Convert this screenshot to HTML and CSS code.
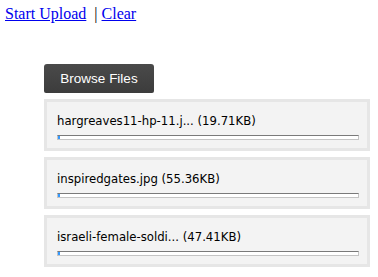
FILE: index.html
```html
<!DOCTYPE html>
<html lang="en">
<head>
    <meta charset="UTF-8">
    <title>Upload</title>
    <link rel="stylesheet" href="styles.css">
</head>
<body>
    <div class="links">
        <a href="#">Start Upload</a> &nbsp;|&nbsp;<a href="#">Clear</a>
    </div>

    <div class="uploader">
        <div class="browse">Browse Files</div>

        <div class="queue">
            <div class="item">
                <div class="name">hargreaves11-hp-11.j... (19.71KB)</div>
                <div class="bar"><div class="fill"></div></div>
            </div>
            <div class="item">
                <div class="name">inspiredgates.jpg (55.36KB)</div>
                <div class="bar"><div class="fill"></div></div>
            </div>
            <div class="item">
                <div class="name">israeli-female-soldi... (47.41KB)</div>
                <div class="bar"><div class="fill"></div></div>
            </div>
        </div>
    </div>
</body>
</html>
```

FILE: styles.css
```css
body {
    margin: 5px;
    font-family: "Liberation Serif", serif;
    font-size: 16px;
    background: #fff;
}
.links a {
    color: #0000ee;
}
.uploader {
    margin: 41px 0 0 39px;
    width: 326px;
}
.browse {
    width: 110px;
    height: 29px;
    line-height: 29px;
    text-align: center;
    background: linear-gradient(#4a4a4a, #3c3c3c);
    color: #fff;
    font-family: "Liberation Sans", sans-serif;
    font-size: 13.5px;
    border-radius: 3px 3px 2px 2px;
}
.queue {
    margin-top: 6px;
}
.item {
    border: 3px solid #e6e6e6;
    background: #f3f3f3;
    padding: 12px 8px 8px 10px;
    margin-bottom: 6px;
}
.name {
    font-family: "DejaVu Sans", Verdana, sans-serif;
    font-size: 11.7px;
    line-height: 14px;
    color: #000;
}
.bar {
    margin-top: 7px;
    height: 3px;
    border: 1px solid #c4c4c4;
    border-top-color: #7a7a7a;
    background: #fff;
}
.fill {
    width: 2px;
    height: 3px;
    background: #3399ff;
}
```
